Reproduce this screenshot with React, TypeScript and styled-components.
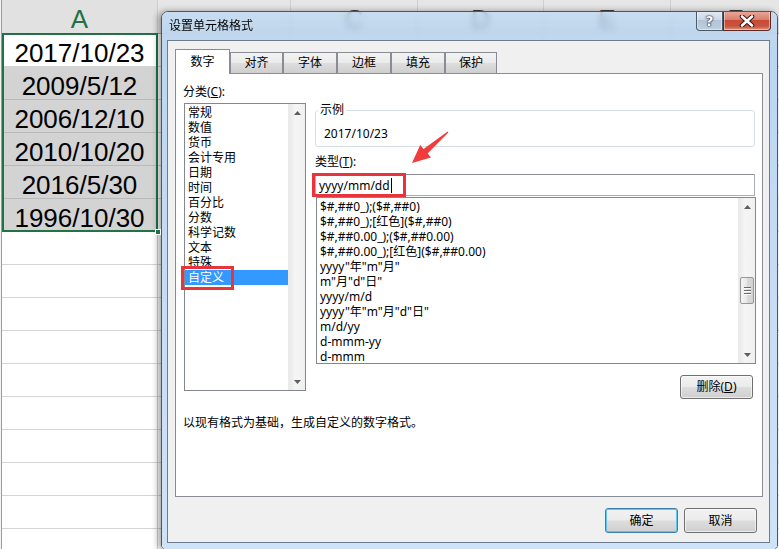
import React from "react";
import styled, { createGlobalStyle } from "styled-components";

const GlobalStyle = createGlobalStyle`
  html, body {
    margin: 0;
    padding: 0;
    background: #fff;
  }
  body {
    font-family: "Noto Sans", "Noto Sans CJK SC", sans-serif;
    font-size: 12px;
    color: #000;
  }
  * {
    box-sizing: border-box;
  }
`;

const sheetFont = `"Liberation Sans", Arial, sans-serif`;

const Screen = styled.div`
  position: relative;
  width: 779px;
  height: 549px;
  overflow: hidden;
  background: #fff;
`;

/* ---------- spreadsheet behind the dialog ---------- */

const Sheet = styled.div`
  display: flex;
  height: 100%;
`;

const Gutter = styled.div`
  width: 2px;
  flex: none;
  background: #f3f3f3;
  border-right: 1px solid #9b9b9b;
`;

const Column = styled.div<{ $width: number }>`
  width: ${(p) => p.$width}px;
  flex: none;
  display: flex;
  flex-direction: column;
  border-right: 1px solid #d0d0d0;
`;

const ColumnHead = styled.div<{ $active?: boolean }>`
  height: 34px;
  flex: none;
  display: flex;
  align-items: center;
  justify-content: center;
  padding-top: 6px;
  background: ${(p) => (p.$active ? "#e1e1e1" : "#e6e6e6")};
  border-bottom: 1px solid ${(p) => (p.$active ? "#217346" : "#ababab")};
  color: ${(p) => (p.$active ? "#217346" : "#3a3a3a")};
  font: 26px ${sheetFont};
`;

const Selection = styled.div`
  position: relative;
  display: flex;
  flex-direction: column;

  &::after {
    content: "";
    position: absolute;
    inset: -1px -1px 0 0;
    border: 2px solid #217346;
    pointer-events: none;
  }
`;

const FillHandle = styled.span`
  position: absolute;
  right: -4px;
  bottom: -3px;
  width: 6px;
  height: 6px;
  background: #217346;
  border: 1px solid #fff;
  z-index: 1;
`;

const Cell = styled.div<{ $tone?: "active" | "selected" | "plain" }>`
  height: 33px;
  flex: none;
  padding-top: 3px;
  border-bottom: 1px solid ${(p) => (p.$tone === "selected" ? "#b9b9b9" : "#d4d4d4")};
  background: ${(p) => (p.$tone === "selected" ? "#d3d3d3" : "#fff")};
  font: 26px/32px ${sheetFont};
  text-align: center;
  white-space: nowrap;
`;

/* ---------- dialog window ---------- */

const Window = styled.div`
  position: absolute;
  left: 161px;
  top: 11px;
  width: 617px;
  height: 539px;
  display: flex;
  flex-direction: column;
  border: 1px solid #47586b;
  border-radius: 7px 7px 5px 5px;
  overflow: hidden;
  box-shadow: -3px 0 6px rgba(0, 0, 0, 0.35);
`;

const TitleBar = styled.div`
  height: 28px;
  flex: none;
  display: flex;
  align-items: flex-start;
  background: linear-gradient(180deg, rgba(192, 218, 243, 0.78), rgba(176, 206, 236, 0.8));
  backdrop-filter: blur(3px);
`;

const Title = styled.div`
  flex: 1;
  padding: 6px 0 0 7px;
  line-height: 16px;
  font-size: 12px;
`;

const CaptionButtons = styled.div`
  display: flex;
  margin: -1px 6px 0 0;
`;

const CaptionButton = styled.div<{ $kind: "help" | "close" }>`
  width: ${(p) => (p.$kind === "close" ? 48 : 27)}px;
  height: 20px;
  display: flex;
  align-items: center;
  justify-content: center;
  border: 1px solid ${(p) => (p.$kind === "close" ? "#5a2b25" : "#4a5a6c")};
  border-top: none;
  border-radius: ${(p) => (p.$kind === "close" ? "0 0 4px 0" : "0 0 0 4px")};
  background: ${(p) =>
    p.$kind === "close"
      ? "linear-gradient(180deg, #e9a99b 0%, #d9806e 45%, #c74a36 50%, #c9553f 80%, #e0927e 100%)"
      : "linear-gradient(180deg, #e3ebf3 0%, #cbd8e5 45%, #b2c4d6 50%, #bfd0e0 100%)"};
  box-shadow: inset 0 0 0 1px rgba(255, 255, 255, 0.45);
`;

const HelpGlyph = styled.span`
  font: bold 14px "DejaVu Sans", sans-serif;
  color: #fff;
  text-shadow: 0 0 1px #1d2b3a, 0 0 1px #1d2b3a, 0 0 2px #1d2b3a;
`;

const Frame = styled.div`
  flex: 1;
  display: flex;
  padding: 0 7px 6px 5px;
  background: linear-gradient(180deg, #bcd6f0, #cfe3f8);
`;

const Client = styled.div`
  flex: 1;
  display: flex;
  flex-direction: column;
  border: 1px solid #6d7d8f;
  background: #f0f0f0;
  padding: 8px 6px 0 7px;
`;

const TabRow = styled.div`
  display: flex;
  align-items: flex-end;
  height: 24px;
  position: relative;
  z-index: 1;
`;

const Tab = styled.div<{ $active?: boolean; $width: number }>`
  width: ${(p) => p.$width}px;
  height: ${(p) => (p.$active ? 25 : 21)}px;
  margin-bottom: ${(p) => (p.$active ? -1 : 0)}px;
  display: flex;
  align-items: center;
  justify-content: center;
  padding-bottom: ${(p) => (p.$active ? 1 : 0)}px;
  border: 1px solid #898c95;
  border-bottom: none;
  background: ${(p) =>
    p.$active
      ? "#fff"
      : "linear-gradient(180deg, #f2f2f2 0%, #ebebeb 48%, #dddddd 52%, #cfcfcf 100%)"};
  line-height: 16px;
`;

const Panel = styled.div`
  height: 424px;
  flex: none;
  display: flex;
  flex-direction: column;
  background: #fff;
  border: 1px solid #898c95;
  padding: 10px 7px 0 7px;
`;

const Columns = styled.div`
  display: flex;
  gap: 8px;
`;

const LeftCol = styled.div`
  width: 124px;
  flex: none;
  display: flex;
  flex-direction: column;
`;

const RightCol = styled.div`
  width: 440px;
  flex: none;
  display: flex;
  flex-direction: column;
  padding-top: 18px;
`;

const FieldLabel = styled.div<{ $gap?: number }>`
  line-height: 16px;
  margin-top: ${(p) => p.$gap ?? 0}px;
`;

const ListBox = styled.div<{ $width: number; $height: number; $offset: number }>`
  width: ${(p) => p.$width}px;
  height: ${(p) => p.$height}px;
  margin: ${(p) => p.$offset}px 0 0 1px;
  display: flex;
  border: 1px solid #828790;
  background: #fff;
`;

const ListItems = styled.div`
  flex: 1;
  padding-top: 1px;
  min-width: 0;
`;

const ListItem = styled.div<{ $selected?: boolean; $indent: number }>`
  position: relative;
  height: 15px;
  line-height: 15px;
  padding-left: ${(p) => p.$indent}px;
  white-space: nowrap;
  background: ${(p) => (p.$selected ? "#3399ff" : "transparent")};
  color: ${(p) => (p.$selected ? "#fff" : "#000")};
`;

const RedMark = styled.span<{ $left: number; $top: number; $w: number; $h: number }>`
  position: absolute;
  left: ${(p) => p.$left}px;
  top: ${(p) => p.$top}px;
  width: ${(p) => p.$w}px;
  height: ${(p) => p.$h}px;
  border: 3px solid #e8343c;
  pointer-events: none;
`;

const ScrollTrack = styled.div`
  width: 17px;
  flex: none;
  display: flex;
  flex-direction: column;
  background: linear-gradient(90deg, #e9e9e9, #f5f5f5 40%, #f0f0f0);
  border-left: 1px solid #eaeaea;
`;

const ScrollArrow = styled.div`
  height: 17px;
  flex: none;
  display: flex;
  align-items: center;
  justify-content: center;
`;

const ScrollGap = styled.div<{ $size?: number }>`
  ${(p) => (p.$size !== undefined ? `height: ${p.$size}px; flex: none;` : "flex: 1;")}
`;

const Thumb = styled.div`
  height: 27px;
  flex: none;
  margin: 0 1px;
  display: flex;
  flex-direction: column;
  align-items: center;
  justify-content: center;
  gap: 2px;
  border: 1px solid #979797;
  border-radius: 2px;
  background: linear-gradient(90deg, #f4f4f4 0%, #e8e8e8 50%, #dadada 51%, #d2d2d2 100%);
`;

const Grip = styled.span`
  width: 7px;
  height: 1px;
  background: #6a6a6a;
  box-shadow: 0 1px 0 #fff;
`;

const SampleBox = styled.fieldset`
  margin: 0;
  padding: 0 0 4px 2px;
  min-width: 0;
  border: 1px solid #d5dfe6;
  border-radius: 3px;
`;

const SampleLegend = styled.legend`
  padding: 0 2px;
  line-height: 16px;
  font-size: 12px;
`;

const SampleValue = styled.div`
  margin-top: 8px;
  padding-left: 6px;
  line-height: 16px;
`;

const TypeInput = styled.div`
  position: relative;
  height: 22px;
  margin-top: 4px;
  padding-left: 3px;
  display: flex;
  align-items: center;
  border: 1px solid #abadb3;
  border-top-color: #8e9096;
  font-size: 12px;
`;

const Caret = styled.span`
  width: 1px;
  height: 15px;
  margin-left: 1px;
  background: #000;
`;

const DeleteRow = styled.div`
  display: flex;
  justify-content: flex-end;
  margin-top: 11px;
  padding-right: 2px;
`;

const Button = styled.div<{ $primary?: boolean; $height?: number }>`
  width: 73px;
  height: ${(p) => p.$height ?? 25}px;
  display: flex;
  align-items: center;
  justify-content: center;
  border: 1px solid ${(p) => (p.$primary ? "#3c7fb1" : "#707070")};
  border-radius: 3px;
  background: linear-gradient(180deg, #f2f2f2 0%, #ebebeb 48%, #dddddd 52%, #cfcfcf 100%);
  box-shadow: inset 0 0 0 1px ${(p) => (p.$primary ? "#5fc6f3" : "rgba(255,255,255,0.6)")};
  line-height: 16px;
`;

const Description = styled.div`
  margin-top: 16px;
  line-height: 16px;
`;

const Footer = styled.div`
  display: flex;
  justify-content: flex-end;
  gap: 6px;
  margin-top: 11px;
  padding-right: 6px;
`;

const Callout = styled.svg`
  position: absolute;
  left: 405px;
  top: 126px;
  width: 50px;
  height: 42px;
  pointer-events: none;
`;

/* ---------- data ---------- */

const dates = ["2017/10/23", "2009/5/12", "2006/12/10", "2010/10/20", "2016/5/30", "1996/10/30"];

// B sits under the dialog title, so its letter is left out
const otherColumns = [
  { name: "", width: 133 },
  { name: "C", width: 127 },
  { name: "D", width: 126 },
  { name: "E", width: 127 },
  { name: "F", width: 130 },
];

const tabs = [
  { name: "数字", width: 55 },
  { name: "对齐", width: 53 },
  { name: "字体", width: 54 },
  { name: "边框", width: 54 },
  { name: "填充", width: 54 },
  { name: "保护", width: 52 },
];

const categories = [
  "常规",
  "数值",
  "货币",
  "会计专用",
  "日期",
  "时间",
  "百分比",
  "分数",
  "科学记数",
  "文本",
  "特殊",
  "自定义",
];

const formats = [
  "$#,##0_);($#,##0)",
  "$#,##0_);[红色]($#,##0)",
  "$#,##0.00_);($#,##0.00)",
  "$#,##0.00_);[红色]($#,##0.00)",
  'yyyy"年"m"月"',
  'm"月"d"日"',
  "yyyy/m/d",
  'yyyy"年"m"月"d"日"',
  "m/d/yy",
  "d-mmm-yy",
  "d-mmm",
];

const Arrow = ({ up }: { up?: boolean }) => (
  <svg width="7" height="4" viewBox="0 0 7 4">
    <path d={up ? "M0 4 L3.5 0 L7 4 Z" : "M0 0 L3.5 4 L7 0 Z"} fill="#5f5f5f" />
  </svg>
);

const CloseIcon = () => (
  <svg width="16" height="12" viewBox="0 0 16 12">
    <path d="M3 1.5 L13 10.5 M13 1.5 L3 10.5" stroke="#3a1410" strokeWidth="4.6" strokeLinecap="round" />
    <path d="M3 1.5 L13 10.5 M13 1.5 L3 10.5" stroke="#fff" strokeWidth="2.6" strokeLinecap="round" />
  </svg>
);

const Scrollbar = ({ thumbAt }: { thumbAt?: number }) => (
  <ScrollTrack>
    <ScrollArrow>
      <Arrow up />
    </ScrollArrow>
    {thumbAt !== undefined && (
      <>
        <ScrollGap $size={thumbAt} />
        <Thumb>
          <Grip />
          <Grip />
          <Grip />
        </Thumb>
      </>
    )}
    <ScrollGap />
    <ScrollArrow>
      <Arrow />
    </ScrollArrow>
  </ScrollTrack>
);

const emptyRows = Array.from({ length: 10 }, (_, i) => i);
const allRows = Array.from({ length: 16 }, (_, i) => i);

export default function App() {
  return (
    <Screen>
      <GlobalStyle />
      <Sheet>
        <Gutter />
        <Column $width={156}>
          <ColumnHead $active>A</ColumnHead>
          <Selection>
            {dates.map((d, i) => (
              <Cell key={d} $tone={i === 0 ? "active" : "selected"}>
                {d}
              </Cell>
            ))}
            <FillHandle />
          </Selection>
          {emptyRows.map((r) => (
            <Cell key={r} />
          ))}
        </Column>
        {otherColumns.map((c, i) => (
          <Column key={i} $width={c.width}>
            <ColumnHead>{c.name}</ColumnHead>
            {allRows.map((r) => (
              <Cell key={r} />
            ))}
          </Column>
        ))}
      </Sheet>

      <Window>
        <TitleBar>
          <Title>设置单元格格式</Title>
          <CaptionButtons>
            <CaptionButton $kind="help">
              <HelpGlyph>?</HelpGlyph>
            </CaptionButton>
            <CaptionButton $kind="close">
              <CloseIcon />
            </CaptionButton>
          </CaptionButtons>
        </TitleBar>
        <Frame>
          <Client>
            <TabRow>
              {tabs.map((t, i) => (
                <Tab key={t.name} $width={t.width} $active={i === 0}>
                  {t.name}
                </Tab>
              ))}
            </TabRow>
            <Panel>
              <Columns>
                <LeftCol>
                  <FieldLabel>
                    分类(<u>C</u>):
                  </FieldLabel>
                  <ListBox $width={122} $height={288} $offset={3}>
                    <ListItems>
                      {categories.map((c) => (
                        <ListItem key={c} $indent={3} $selected={c === "自定义"}>
                          {c}
                          {c === "自定义" && <RedMark $left={-4} $top={-4} $w={53} $h={24} />}
                        </ListItem>
                      ))}
                    </ListItems>
                    <Scrollbar />
                  </ListBox>
                </LeftCol>
                <RightCol>
                  <SampleBox>
                    <SampleLegend>示例</SampleLegend>
                    <SampleValue>2017/10/23</SampleValue>
                  </SampleBox>
                  <FieldLabel $gap={7}>
                    类型(<u>T</u>):
                  </FieldLabel>
                  <TypeInput>
                    yyyy/mm/dd
                    <Caret />
                    <RedMark $left={-4} $top={-2} $w={94} $h={24} />
                  </TypeInput>
                  <ListBox $width={440} $height={167} $offset={1}>
                    <ListItems>
                      {formats.map((f) => (
                        <ListItem key={f} $indent={3}>
                          {f}
                        </ListItem>
                      ))}
                    </ListItems>
                    <Scrollbar thumbAt={62} />
                  </ListBox>
                  <DeleteRow>
                    <Button $height={24}>
                      删除(<u>D</u>)
                    </Button>
                  </DeleteRow>
                </RightCol>
              </Columns>
              <Description>以现有格式为基础，生成自定义的数字格式。</Description>
            </Panel>
            <Footer>
              <Button $primary>确定</Button>
              <Button>取消</Button>
            </Footer>
          </Client>
        </Frame>
      </Window>

      <Callout viewBox="405 126 50 42">
        <polygon
          points="412,163 431,157.5 427.6,153.6 448.4,132.5 447.6,131.5 423.6,148.9 420.2,145 "
          fill="#f23b3b"
        />
      </Callout>
    </Screen>
  );
}
